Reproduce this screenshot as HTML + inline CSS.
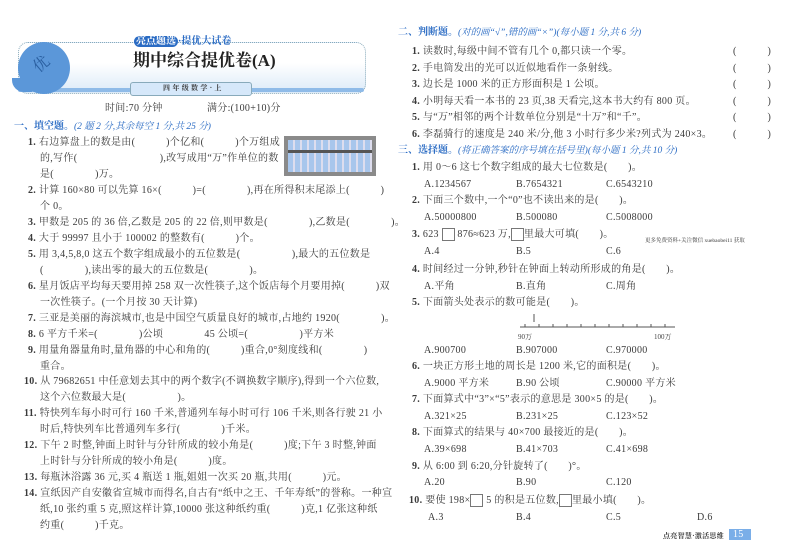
<!DOCTYPE html>
<html><head><meta charset="utf-8"><style>
body{margin:0;width:800px;height:560px;background:#fff;position:relative;overflow:hidden;font-family:"Liberation Serif","Noto Serif CJK SC",serif;color:#3a3a3a;}
.l{position:absolute;font-size:10px;white-space:nowrap;line-height:13px;letter-spacing:0.3px}
.n{font-weight:bold;font-family:"Liberation Serif",serif}
.h{color:#2b6cc4;font-weight:bold;letter-spacing:0}
.h span{font-weight:normal;font-size:9.5px;font-style:italic}
.bx{display:inline-block;width:11px;height:11px;border:1px solid #777;vertical-align:middle}
</style></head><body>
<!-- header -->
<div style="position:absolute;left:18px;top:42px;width:346px;height:50px;border:1px dotted #8ab;border-radius:10px;background:linear-gradient(#fff 40%,#dbeaf8)"></div>
<div style="position:absolute;left:18px;top:88px;width:346px;height:4px;background:#8fbbe8;border-radius:2px"></div>
<div style="position:absolute;left:18px;top:42px;width:52px;height:52px;border-radius:50%;background:#5b97d9"></div>
<div style="position:absolute;left:12px;top:78px;width:20px;height:14px;background:#5b97d9;border-radius:0 0 0 12px"></div>
<div class="l" style="left:34px;top:56px;font-size:16px;color:#2a5fa0;transform:rotate(-40deg);line-height:18px">优</div>
<div class="l" style="left:134px;top:35px;color:#2b6cc4;font-weight:bold;font-size:10px;letter-spacing:0"><span style="background:#2b6cc4;color:#fff;border-radius:6px;padding:0 2px">亮点题选</span>·提优大试卷</div>
<div class="l" style="left:133px;top:51px;font-size:17px;font-weight:bold;line-height:20px;color:#222;letter-spacing:0">期中综合提优卷(A)</div>
<div style="position:absolute;left:130px;top:82px;width:120px;height:12px;background:#d6e8fa;border:1px solid #8ab;border-radius:3px"></div>
<div class="l" style="left:163px;top:82px;font-size:7px;font-weight:bold">四 年 级 数 学 · 上</div>
<div class="l" style="left:105px;top:102px;font-size:10px">时间:70 分钟</div>
<div class="l" style="left:207px;top:102px;font-size:10px">满分:(100+10)分</div>
<!-- abacus -->
<div style="position:absolute;left:284px;top:136px;width:92px;height:40px;background:#8a8a8a"></div>
<div style="position:absolute;left:288px;top:140px;width:84px;height:32px;background:repeating-linear-gradient(90deg,#a8c6ec 0 5px,#dde 5px 7px)"></div>
<div style="position:absolute;left:288px;top:150px;width:84px;height:3px;background:#555"></div>
<!-- left column -->
<div class="l h" style="left:14px;top:120px">一、填空题。<span>(2 题 2 分,其余每空 1 分,共 25 分)</span></div>
<div class="l" style="left:28px;top:136px"><b class="n">1.</b> 右边算盘上的数是由(　　　)个亿和(　　　)个万组成</div>
<div class="l" style="left:40px;top:152px">的,写作(　　　　　　　　),改写成用“万”作单位的数</div>
<div class="l" style="left:40px;top:168px">是(　　　　)万。</div>
<div class="l" style="left:28px;top:184px"><b class="n">2.</b> 计算 160×80 可以先算 16×(　　　)=(　　　　),再在所得积末尾添上(　　　)</div>
<div class="l" style="left:40px;top:200px">个 0。</div>
<div class="l" style="left:28px;top:216px"><b class="n">3.</b> 甲数是 205 的 36 倍,乙数是 205 的 22 倍,则甲数是(　　　　),乙数是(　　　　)。</div>
<div class="l" style="left:28px;top:232px"><b class="n">4.</b> 大于 99997 且小于 100002 的整数有(　　　)个。</div>
<div class="l" style="left:28px;top:248px"><b class="n">5.</b> 用 3,4,5,8,0 这五个数字组成最小的五位数是(　　　　　),最大的五位数是</div>
<div class="l" style="left:40px;top:264px">(　　　　),读出零的最大的五位数是(　　　　)。</div>
<div class="l" style="left:28px;top:280px"><b class="n">6.</b> 星月饭店平均每天要用掉 258 双一次性筷子,这个饭店每个月要用掉(　　　)双</div>
<div class="l" style="left:40px;top:296px">一次性筷子。(一个月按 30 天计算)</div>
<div class="l" style="left:28px;top:312px"><b class="n">7.</b> 三亚是美丽的海滨城市,也是中国空气质量良好的城市,占地约 1920(　　　　)。</div>
<div class="l" style="left:28px;top:328px"><b class="n">8.</b> 6 平方千米=(　　　　)公顷　　　　45 公顷=(　　　　　)平方米</div>
<div class="l" style="left:28px;top:344px"><b class="n">9.</b> 用量角器量角时,量角器的中心和角的(　　　)重合,0°刻度线和(　　　　)</div>
<div class="l" style="left:40px;top:360px">重合。</div>
<div class="l" style="left:24px;top:375px"><b class="n">10.</b> 从 79682651 中任意划去其中的两个数字(不调换数字顺序),得到一个六位数,</div>
<div class="l" style="left:40px;top:391px">这个六位数最大是(　　　　　)。</div>
<div class="l" style="left:24px;top:407px"><b class="n">11.</b> 特快列车每小时可行 160 千米,普通列车每小时可行 106 千米,则各行驶 21 小</div>
<div class="l" style="left:40px;top:423px">时后,特快列车比普通列车多行(　　　　)千米。</div>
<div class="l" style="left:24px;top:439px"><b class="n">12.</b> 下午 2 时整,钟面上时针与分针所成的较小角是(　　　)度;下午 3 时整,钟面</div>
<div class="l" style="left:40px;top:455px">上时针与分针所成的较小角是(　　　)度。</div>
<div class="l" style="left:24px;top:471px"><b class="n">13.</b> 每瓶沐浴露 36 元,买 4 瓶送 1 瓶,姐姐一次买 20 瓶,共用(　　　)元。</div>
<div class="l" style="left:24px;top:487px"><b class="n">14.</b> 宣纸因产自安徽省宣城市而得名,自古有“纸中之王、千年寿纸”的誉称。一种宣</div>
<div class="l" style="left:40px;top:503px">纸,10 张约重 5 克,照这样计算,10000 张这种纸约重(　　　)克,1 亿张这种纸</div>
<div class="l" style="left:40px;top:519px">约重(　　　)千克。</div>
<!-- right column -->
<div class="l h" style="left:398px;top:26px">二、判断题。<span>(对的画“√”,错的画“×”)(每小题 1 分,共 6 分)</span></div>
<div class="l" style="left:412px;top:45px"><b class="n">1.</b> 读数时,每级中间不管有几个 0,都只读一个零。</div>
<div class="l" style="left:412px;top:62px"><b class="n">2.</b> 手电筒发出的光可以近似地看作一条射线。</div>
<div class="l" style="left:412px;top:78px"><b class="n">3.</b> 边长是 1000 米的正方形面积是 1 公顷。</div>
<div class="l" style="left:412px;top:95px"><b class="n">4.</b> 小明每天看一本书的 23 页,38 天看完,这本书大约有 800 页。</div>
<div class="l" style="left:412px;top:111px"><b class="n">5.</b> 与“万”相邻的两个计数单位分别是“十万”和“千”。</div>
<div class="l" style="left:412px;top:128px"><b class="n">6.</b> 李磊骑行的速度是 240 米/分,他 3 小时行多少米?列式为 240×3。</div>
<div class="l" style="left:733px;top:45px">(　　　)</div>
<div class="l" style="left:733px;top:62px">(　　　)</div>
<div class="l" style="left:733px;top:78px">(　　　)</div>
<div class="l" style="left:733px;top:95px">(　　　)</div>
<div class="l" style="left:733px;top:111px">(　　　)</div>
<div class="l" style="left:733px;top:128px">(　　　)</div>
<div class="l h" style="left:398px;top:144px">三、选择题。<span>(将正确答案的序号填在括号里)(每小题 1 分,共 10 分)</span></div>
<div class="l" style="left:412px;top:161px"><b class="n">1.</b> 用 0～6 这七个数字组成的最大七位数是(　　)。</div>
<div class="l" style="left:424px;top:178px">A.1234567</div><div class="l" style="left:516px;top:178px">B.7654321</div><div class="l" style="left:606px;top:178px">C.6543210</div>
<div class="l" style="left:412px;top:194px"><b class="n">2.</b> 下面三个数中,一个“0”也不读出来的是(　　)。</div>
<div class="l" style="left:424px;top:211px">A.50000800</div><div class="l" style="left:516px;top:211px">B.500080</div><div class="l" style="left:606px;top:211px">C.5008000</div>
<div class="l" style="left:412px;top:228px"><b class="n">3.</b> 623 <span class="bx"></span> 876≈623 万,<span class="bx"></span>里最大可填(　　)。</div>
<div class="l" style="left:645px;top:238px;font-size:5.5px;line-height:7px;letter-spacing:0">更多免费资料+关注微信 xuebaobei11 获取</div>
<div class="l" style="left:424px;top:245px">A.4</div><div class="l" style="left:516px;top:245px">B.5</div><div class="l" style="left:606px;top:245px">C.6</div>
<div class="l" style="left:412px;top:263px"><b class="n">4.</b> 时间经过一分钟,秒针在钟面上转动所形成的角是(　　)。</div>
<div class="l" style="left:424px;top:280px">A.平角</div><div class="l" style="left:516px;top:280px">B.直角</div><div class="l" style="left:606px;top:280px">C.周角</div>
<div class="l" style="left:412px;top:296px"><b class="n">5.</b> 下面箭头处表示的数可能是(　　)。</div>
<svg style="position:absolute;left:515px;top:312px" width="162" height="30"><line x1="5" y1="15" x2="160" y2="15" stroke="#555"/><g stroke="#555"><line x1="10" y1="12" x2="10" y2="15"/><line x1="24" y1="12" x2="24" y2="15"/><line x1="38" y1="12" x2="38" y2="15"/><line x1="52" y1="12" x2="52" y2="15"/><line x1="66" y1="12" x2="66" y2="15"/><line x1="80" y1="12" x2="80" y2="15"/><line x1="94" y1="12" x2="94" y2="15"/><line x1="108" y1="12" x2="108" y2="15"/><line x1="122" y1="12" x2="122" y2="15"/><line x1="136" y1="12" x2="136" y2="15"/><line x1="150" y1="12" x2="150" y2="15"/><line x1="19" y1="2" x2="19" y2="10"/></g><text x="3" y="27" font-size="7" fill="#444">90万</text><text x="139" y="27" font-size="7" fill="#444">100万</text></svg>
<div class="l" style="left:424px;top:344px">A.900700</div><div class="l" style="left:516px;top:344px">B.907000</div><div class="l" style="left:606px;top:344px">C.970000</div>
<div class="l" style="left:412px;top:360px"><b class="n">6.</b> 一块正方形土地的周长是 1200 米,它的面积是(　　)。</div>
<div class="l" style="left:424px;top:377px">A.9000 平方米</div><div class="l" style="left:516px;top:377px">B.90 公顷</div><div class="l" style="left:606px;top:377px">C.90000 平方米</div>
<div class="l" style="left:412px;top:393px"><b class="n">7.</b> 下面算式中“3”×“5”表示的意思是 300×5 的是(　　)。</div>
<div class="l" style="left:424px;top:410px">A.321×25</div><div class="l" style="left:516px;top:410px">B.231×25</div><div class="l" style="left:606px;top:410px">C.123×52</div>
<div class="l" style="left:412px;top:426px"><b class="n">8.</b> 下面算式的结果与 40×700 最接近的是(　　)。</div>
<div class="l" style="left:424px;top:443px">A.39×698</div><div class="l" style="left:516px;top:443px">B.41×703</div><div class="l" style="left:606px;top:443px">C.41×698</div>
<div class="l" style="left:412px;top:460px"><b class="n">9.</b> 从 6:00 到 6:20,分针旋转了(　　)°。</div>
<div class="l" style="left:424px;top:476px">A.20</div><div class="l" style="left:516px;top:476px">B.90</div><div class="l" style="left:606px;top:476px">C.120</div>
<div class="l" style="left:409px;top:494px"><b class="n">10.</b> 要使 198×<span class="bx"></span> 5 的积是五位数,<span class="bx"></span>里最小填(　　)。</div>
<div class="l" style="left:428px;top:511px">A.3</div><div class="l" style="left:516px;top:511px">B.4</div><div class="l" style="left:606px;top:511px">C.5</div><div class="l" style="left:697px;top:511px">D.6</div>
<div class="l" style="left:663px;top:530px;font-size:7px;font-weight:bold">点亮智慧·激活思维</div>
<div style="position:absolute;left:729px;top:529px;width:22px;height:11px;background:#7aaee8"></div>
<div class="l" style="left:733px;top:528px;color:#fff;font-size:10px">15</div>
</body></html>
